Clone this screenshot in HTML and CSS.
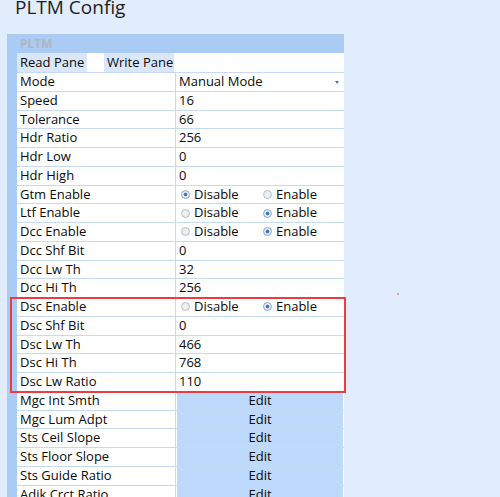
FILE: index.html
```html
<!DOCTYPE html>
<html lang="en">
<head>
    <meta charset="UTF-8" />
    <title>PLTM Config</title>
    <link rel="stylesheet" href="styles.css">
</head>
<body>
    <h1 class="title">PLTM Config</h1>

    <div class="panel">
      <div class="panel-head">PLTM</div>
      <div class="panel-body">
        <div class="tabs">
          <span class="tab">Read Pane</span>
          <span class="tab-gap"></span>
          <span class="tab">Write Pane</span>
        </div>

        <div class="row"><span class="name">Mode</span><span class="val select">Manual Mode<i class="arrow"></i></span></div>
        <div class="row"><span class="name">Speed</span><span class="val">16</span></div>
        <div class="row"><span class="name">Tolerance</span><span class="val">66</span></div>
        <div class="row"><span class="name">Hdr Ratio</span><span class="val">256</span></div>
        <div class="row"><span class="name">Hdr Low</span><span class="val">0</span></div>
        <div class="row"><span class="name">Hdr High</span><span class="val">0</span></div>
        <div class="row"><span class="name">Gtm Enable</span><span class="val radios"><label><i class="radio on"></i>Disable</label><label><i class="radio"></i>Enable</label></span></div>
        <div class="row"><span class="name">Ltf Enable</span><span class="val radios"><label><i class="radio"></i>Disable</label><label><i class="radio on"></i>Enable</label></span></div>
        <div class="row"><span class="name">Dcc Enable</span><span class="val radios"><label><i class="radio"></i>Disable</label><label><i class="radio on"></i>Enable</label></span></div>
        <div class="row"><span class="name">Dcc Shf Bit</span><span class="val">0</span></div>
        <div class="row"><span class="name">Dcc Lw Th</span><span class="val">32</span></div>
        <div class="row"><span class="name">Dcc Hi Th</span><span class="val">256</span></div>
        <div class="row"><span class="name">Dsc Enable</span><span class="val radios"><label><i class="radio"></i>Disable</label><label><i class="radio on"></i>Enable</label></span></div>
        <div class="row"><span class="name">Dsc Shf Bit</span><span class="val">0</span></div>
        <div class="row"><span class="name">Dsc Lw Th</span><span class="val">466</span></div>
        <div class="row"><span class="name">Dsc Hi Th</span><span class="val">768</span></div>
        <div class="row"><span class="name">Dsc Lw Ratio</span><span class="val">110</span></div>
        <div class="row"><span class="name">Mgc Int Smth</span><span class="val edit">Edit</span></div>
        <div class="row"><span class="name">Mgc Lum Adpt</span><span class="val edit">Edit</span></div>
        <div class="row"><span class="name">Sts Ceil Slope</span><span class="val edit">Edit</span></div>
        <div class="row"><span class="name">Sts Floor Slope</span><span class="val edit">Edit</span></div>
        <div class="row"><span class="name">Sts Guide Ratio</span><span class="val edit">Edit</span></div>
        <div class="row"><span class="name">Adik Crct Ratio</span><span class="val edit">Edit</span></div>
      </div>
    </div>

    <!-- annotation marks drawn over the screenshot -->
    <div class="mark-box"></div>
    <div class="mark-dot"></div>
</body>
</html>
```

FILE: styles.css
```css
body {
    margin: 0;
    height: 497px;
    overflow: hidden;
    background-color: #e1ecfd;
    font-family: "Open Sans", "Noto Sans", sans-serif;
    font-size: 13px;
    color: #0a0a0a;
    position: relative;
}

.title {
    margin: -9px 0 0 15px;
    height: 43px;
    font-size: 19px;
    font-weight: normal;
    line-height: 32px;
    color: #1e1e1e;
}

.panel {
    margin-left: 7px;
    width: 337px;
    background-color: #a9cbf4;
}

.panel-head {
    height: 19px;
    line-height: 19px;
    padding-left: 13px;
    font-weight: bold;
    font-size: 12px;
    color: #b1b6bd;
}

.panel-body {
    margin-left: 10px;
    background-color: #ffffff;
}

.tabs {
    display: flex;
    height: 20px;
    border-bottom: 1px solid #c6daf5;
    box-sizing: border-box;
}

.tab {
    width: 70px;
    background-color: #dae7fb;
    padding-left: 3px;
    box-sizing: border-box;
    line-height: 19px;
}

.tab-gap {
    width: 17px;
}

.row {
    display: grid;
    grid-template-columns: 159px 1fr;
    height: 18.75px;
    box-sizing: border-box;
    border-bottom: 1px solid #c6daf5;
}

.name {
    padding-left: 3px;
    line-height: 17.75px;
    white-space: nowrap;
    border-right: 1px solid #c6daf5;
}

.val {
    padding-left: 3px;
    line-height: 17.75px;
    position: relative;
}

.arrow {
    position: absolute;
    right: 5px;
    top: 8px;
    border-left: 2.5px solid transparent;
    border-right: 2.5px solid transparent;
    border-top: 3px solid #4a78b8;
}

.radios {
    display: flex;
    padding-left: 5px;
}

.radios label {
    display: flex;
    align-items: center;
    width: 82px;
}

.radio {
    width: 7px;
    height: 7px;
    margin-right: 4px;
    border-radius: 50%;
    border: 1px solid #b8c0c8;
    background: radial-gradient(circle, #f4f6f8 0%, #dfe3e8 100%);
}

.radio.on {
    border-color: #8ea6c0;
    background: radial-gradient(circle, #2f6aa8 0%, #4d86c2 30%, #dfe7f0 45%, #eef2f6 100%);
}

.edit {
    margin: 0 1px;
    padding: 0;
    text-align: center;
    background-color: #bdd9fc;
}

.mark-box {
    position: absolute;
    left: 10px;
    top: 297px;
    width: 332px;
    height: 92px;
    border: 2px solid #ec3b45;
}

.mark-dot {
    position: absolute;
    left: 397px;
    top: 293px;
    width: 2px;
    height: 2px;
    background-color: #f19aa2;
}
```
